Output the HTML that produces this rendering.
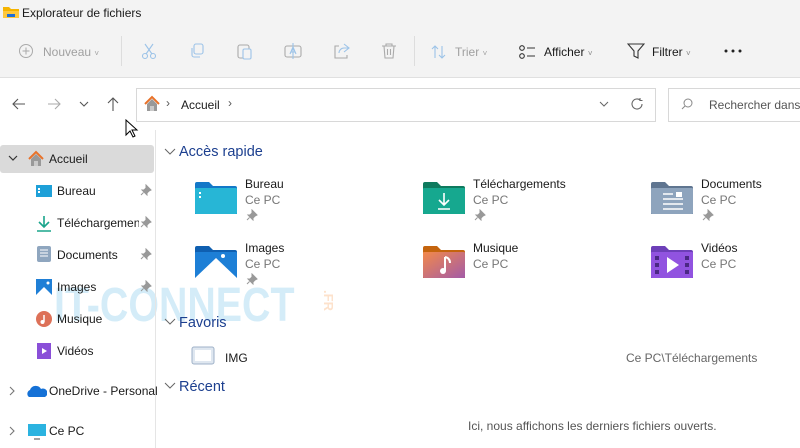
<!DOCTYPE html>
<html><head><meta charset="utf-8"><style>
*{box-sizing:border-box;margin:0;padding:0}
body{width:800px;height:448px;overflow:hidden;background:#fff;font-family:"Liberation Sans",sans-serif;font-size:12px;color:#1a1a1a;position:relative}
.a{position:absolute;white-space:nowrap}
.top{position:absolute;left:0;top:0;width:800px;height:78px;background:#f3f3f3;border-bottom:1px solid #e0e0e0}
.g{color:#a0a0a0}
.sb{color:#1a1a1a;font-size:12px}
.sub{color:#777}
.hd{color:#1c3f8f;font-size:14.5px}
</style></head><body>
<div class="top"></div>
<!-- watermark (behind) -->
<div class="a" style="left:54px;top:278px;font-size:48px;font-weight:bold;color:#d4ecf8;transform:scaleX(0.82);transform-origin:left top">IT-CONNECT</div>
<div class="a" style="left:318px;top:293px;font-size:13px;font-weight:bold;color:#fde2cc;transform:rotate(90deg)">.FR</div>
<!-- title -->
<svg class="a" style="left:2px;top:4px" width="18" height="16"><path d="M1 3h6l2 2h8v9H1z" fill="#f5b400"/><rect x="1" y="7" width="16" height="7" fill="#ffc83d"/><rect x="5" y="10" width="8" height="3" fill="#1e6fd9"/></svg>
<div class="a" style="left:22px;top:6px;font-size:12px">Explorateur de fichiers</div>
<!-- toolbar -->
<svg class="a" style="left:18px;top:43px" width="16" height="16"><circle cx="8" cy="8" r="6.5" fill="none" stroke="#aaa"/><path d="M8 4.5v7M4.5 8h7" stroke="#aaa"/></svg>
<div class="a g" style="left:43px;top:45px">Nouveau <span style="font-size:8px">˅</span></div>
<div class="a" style="left:121px;top:36px;width:1px;height:30px;background:#ddd"></div>
<svg class="a" style="left:140px;top:42px" width="18" height="18" fill="none" stroke="#9cc3e8" stroke-width="1.1"><circle cx="5" cy="14" r="2.5"/><circle cx="13" cy="14" r="2.5"/><path d="M6 12L13 2M12 12L5 2"/></svg>
<svg class="a" style="left:188px;top:42px" width="18" height="18" fill="none" stroke="#9cc3e8" stroke-width="1.1"><rect x="6" y="2" width="9" height="10" rx="2"/><path d="M4 6v7a2 2 0 0 0 2 2h6"/></svg>
<svg class="a" style="left:236px;top:42px" width="18" height="18" fill="none" stroke="#aaa" stroke-width="1.1"><rect x="2" y="3" width="11" height="13" rx="2"/><rect x="7" y="7" width="8" height="10" rx="1.5" stroke="#9cc3e8" fill="#f3f3f3"/></svg>
<svg class="a" style="left:284px;top:42px" width="18" height="18" fill="none" stroke="#9cc3e8" stroke-width="1.1"><rect x="1" y="4" width="16" height="11" rx="2" stroke="#aaa"/><path d="M6 12l3-7 3 7M7 10h4M9 1v16"/></svg>
<svg class="a" style="left:332px;top:42px" width="18" height="18" fill="none" stroke="#9cc3e8" stroke-width="1.1"><path d="M12 2l5 4-5 4M17 6h-5a5 5 0 0 0-5 5" /><path d="M7 4H3v12h12v-3" stroke="#aaa"/></svg>
<svg class="a" style="left:380px;top:42px" width="18" height="18" fill="none" stroke="#aaa" stroke-width="1.1"><path d="M2 4h14M6 4V2h6v2M4 4l1 12h8l1-12M7.5 7v6M10.5 7v6"/></svg>
<div class="a" style="left:414px;top:36px;width:1px;height:30px;background:#ddd"></div>
<svg class="a" style="left:430px;top:44px" width="18" height="16" fill="none" stroke="#9cc3e8" stroke-width="1.1"><path d="M5 14V2M2 5l3-3 3 3M12 2v12M9 11l3 3 3-3"/></svg>
<div class="a g" style="left:455px;top:45px">Trier <span style="font-size:8px">˅</span></div>
<svg class="a" style="left:518px;top:44px" width="18" height="16" fill="none" stroke="#333" stroke-width="1.1"><circle cx="4" cy="4" r="2.3"/><circle cx="4" cy="12" r="2.3"/><path d="M9 4h8M9 12h8"/></svg>
<div class="a" style="left:544px;top:45px">Afficher <span style="font-size:8px;color:#888">˅</span></div>
<svg class="a" style="left:627px;top:42px" width="18" height="18" fill="none" stroke="#333" stroke-width="1.1"><path d="M1 2h16l-6 7v7l-4-2V9z"/></svg>
<div class="a" style="left:652px;top:45px">Filtrer <span style="font-size:8px;color:#888">˅</span></div>
<svg class="a" style="left:724px;top:49px" width="18" height="4" fill="#222"><circle cx="2" cy="2" r="1.5"/><circle cx="9" cy="2" r="1.5"/><circle cx="16" cy="2" r="1.5"/></svg>
<!-- nav -->
<svg class="a" style="left:11px;top:97px" width="16" height="14" fill="none" stroke="#555" stroke-width="1.1"><path d="M14 7H2M7 2L2 7l5 5"/></svg>
<svg class="a" style="left:46px;top:97px" width="16" height="14" fill="none" stroke="#aaa" stroke-width="1.1"><path d="M2 7h12M9 2l5 5-5 5"/></svg>
<svg class="a" style="left:79px;top:100px" width="10" height="8" fill="none" stroke="#555" stroke-width="1.1"><path d="M1 2l4 4 4-4"/></svg>
<svg class="a" style="left:106px;top:96px" width="14" height="16" fill="none" stroke="#555" stroke-width="1.1"><path d="M7 15V2M2 7l5-5 5 5"/></svg>
<div class="a" style="left:136px;top:88px;width:520px;height:34px;border:1px solid #d8d8d8"></div>
<svg class="a" style="left:143px;top:95px" width="18" height="18"><path d="M2 9L9 2l7 7" fill="none" stroke="#e8722a" stroke-width="2"/><path d="M4 9v7h10V9L9 4z" fill="#999"/><rect x="7" y="11" width="4" height="5" fill="#c9c9c9"/></svg>
<div class="a" style="left:166px;top:96px;color:#555">›</div>
<div class="a" style="left:181px;top:98px">Accueil</div>
<div class="a" style="left:228px;top:96px;color:#555">›</div>
<svg class="a" style="left:599px;top:101px" width="10" height="7" fill="none" stroke="#666" stroke-width="1"><path d="M1 1l4 4 4-4"/></svg>
<svg class="a" style="left:630px;top:97px" width="14" height="14" fill="none" stroke="#666" stroke-width="1.1"><path d="M12 7a5 5 0 1 1-2-4M10 1v2.5h2.5"/></svg>
<div class="a" style="left:668px;top:88px;width:140px;height:34px;border:1px solid #d8d8d8"></div>
<svg class="a" style="left:681px;top:98px" width="12" height="12" fill="none" stroke="#888" stroke-width="1"><circle cx="7" cy="5" r="4"/><path d="M4 8l-3 3"/></svg>
<div class="a" style="left:709px;top:98px;color:#555">Rechercher dans</div>
<!-- cursor -->
<svg class="a" style="left:125px;top:119px" width="14" height="20"><path d="M1 1v15l4-4 3 6 2-1-3-6h5z" fill="#fff" stroke="#000"/></svg>
<!-- sidebar -->
<div class="a" style="left:155px;top:130px;width:1px;height:318px;background:#e5e5e5"></div>
<div class="a" style="left:0;top:145px;width:154px;height:28px;background:#dadada;border-radius:3px"></div>
<svg class="a" style="left:8px;top:155px" width="10" height="7" fill="none" stroke="#333" stroke-width="1.2"><path d="M1 1l4 4 4-4"/></svg>
<svg class="a" style="left:27px;top:150px" width="18" height="18"><path d="M2 9L9 2l7 7" fill="none" stroke="#e8722a" stroke-width="2"/><path d="M4 9v7h10V9L9 4z" fill="#999"/><rect x="7" y="11" width="4" height="5" fill="#c9c9c9"/></svg>
<div class="a sb" style="left:49px;top:152px">Accueil</div>

<svg class="a" style="left:36px;top:184px" width="16" height="14"><rect x="0" y="1" width="16" height="12" fill="#1ea0d8"/><rect x="2" y="4" width="2" height="2" fill="#fff"/><rect x="2" y="7" width="2" height="2" fill="#fff"/></svg>
<div class="a sb" style="left:57px;top:184px">Bureau</div>
<svg class="a" style="left:140px;top:184px" width="12" height="12"><path d="M6 1l5 5-2 1-2 2 0 2-5-5h2l2-2z M3.5 8.5L1 11" fill="#999" stroke="#999"/></svg>
<svg class="a" style="left:36px;top:215px" width="16" height="18" fill="none" stroke="#1aa58c" stroke-width="1.6"><path d="M8 1v11M3 7l5 5 5-5M1 16h14"/></svg>
<div class="a sb" style="left:57px;top:216px;width:82px;overflow:hidden">Téléchargements</div>
<svg class="a" style="left:140px;top:216px" width="12" height="12"><path d="M6 1l5 5-2 1-2 2 0 2-5-5h2l2-2z M3.5 8.5L1 11" fill="#999" stroke="#999"/></svg>
<svg class="a" style="left:37px;top:246px" width="14" height="16"><rect x="0" y="0" width="14" height="16" rx="2" fill="#8fa6bf"/><path d="M3 4h8M3 7h8M3 10h8" stroke="#fff"/></svg>
<div class="a sb" style="left:57px;top:248px">Documents</div>
<svg class="a" style="left:140px;top:248px" width="12" height="12"><path d="M6 1l5 5-2 1-2 2 0 2-5-5h2l2-2z M3.5 8.5L1 11" fill="#999" stroke="#999"/></svg>
<svg class="a" style="left:36px;top:279px" width="16" height="16"><rect width="16" height="16" fill="#1f7fd6"/><path d="M0 16L8 8l8 8z" fill="#fff"/><circle cx="12" cy="4" r="1.5" fill="#fff"/></svg>
<div class="a sb" style="left:57px;top:280px">Images</div>
<svg class="a" style="left:140px;top:280px" width="12" height="12"><path d="M6 1l5 5-2 1-2 2 0 2-5-5h2l2-2z M3.5 8.5L1 11" fill="#999" stroke="#999"/></svg>
<svg class="a" style="left:36px;top:311px" width="16" height="16"><circle cx="8" cy="8" r="8" fill="#dd7158"/><path d="M8 4v7" stroke="#fff" stroke-width="1.5"/><circle cx="6.5" cy="11" r="2" fill="#fff"/></svg>
<div class="a sb" style="left:57px;top:312px">Musique</div>
<svg class="a" style="left:37px;top:343px" width="14" height="16"><rect width="14" height="16" fill="#8a4fd8"/><path d="M5 5l5 3-5 3z" fill="#fff"/></svg>
<div class="a sb" style="left:57px;top:344px">Vidéos</div>

<svg class="a" style="left:9px;top:386px" width="7" height="10" fill="none" stroke="#777" stroke-width="1.1"><path d="M1 1l4 4-4 4"/></svg>
<svg class="a" style="left:27px;top:384px" width="20" height="14"><path d="M2 13a4 4 0 0 1 1-7 6 6 0 0 1 11-1 4 4 0 0 1 4 8z" fill="#1571d6"/></svg>
<div class="a sb" style="left:49px;top:384px">OneDrive - Personal</div>
<svg class="a" style="left:9px;top:426px" width="7" height="10" fill="none" stroke="#777" stroke-width="1.1"><path d="M1 1l4 4-4 4"/></svg>
<svg class="a" style="left:28px;top:423px" width="18" height="18"><rect x="0" y="1" width="18" height="12" fill="#2bb3e0"/><path d="M6 16h6" stroke="#444"/></svg>
<div class="a sb" style="left:49px;top:424px">Ce PC</div>

<!-- main -->
<svg class="a" style="left:164px;top:148px" width="12" height="8" fill="none" stroke="#666"><path d="M1 1l5 5 5-5"/></svg>
<div class="a hd" style="left:179px;top:144px">Accès rapide</div>

<svg class="a" style="left:195px;top:180px" width="42" height="36"><path d="M0 4a2 2 0 0 1 2-2h12l4 4h22a2 2 0 0 1 2 2v26H0z" fill="#1378c8"/><rect x="0" y="8" width="42" height="26" rx="1" fill="#27b6d6"/><rect x="4" y="12" width="2" height="2" fill="#fff"/><rect x="4" y="16" width="2" height="2" fill="#fff"/></svg>
<div class="a" style="left:245px;top:177px">Bureau</div><div class="a sub" style="left:245px;top:193px">Ce PC</div>
<svg class="a" style="left:246px;top:209px" width="12" height="12"><path d="M6 1l5 5-2 1-2 2 0 2-5-5h2l2-2z M3.5 8.5L1 11" fill="#999" stroke="#999"/></svg>

<svg class="a" style="left:423px;top:180px" width="42" height="36"><path d="M0 4a2 2 0 0 1 2-2h12l4 4h22a2 2 0 0 1 2 2v26H0z" fill="#0e7a5e"/><rect x="0" y="8" width="42" height="26" rx="1" fill="#16a88f"/><path d="M21 13v12M16 20l5 5 5-5M15 29h12" stroke="#fff" stroke-width="1.6" fill="none"/></svg>
<div class="a" style="left:473px;top:177px">Téléchargements</div><div class="a sub" style="left:473px;top:193px">Ce PC</div>
<svg class="a" style="left:474px;top:209px" width="12" height="12"><path d="M6 1l5 5-2 1-2 2 0 2-5-5h2l2-2z M3.5 8.5L1 11" fill="#999" stroke="#999"/></svg>

<svg class="a" style="left:651px;top:180px" width="42" height="36"><path d="M0 4a2 2 0 0 1 2-2h12l4 4h22a2 2 0 0 1 2 2v26H0z" fill="#5f7590"/><rect x="0" y="8" width="42" height="26" rx="1" fill="#8ea4bd"/><path d="M12 14h10M12 19h20M12 24h20M12 29h20" stroke="#fff" stroke-width="1.6"/><rect x="25" y="12" width="6" height="5" fill="#fff"/></svg>
<div class="a" style="left:701px;top:177px">Documents</div><div class="a sub" style="left:701px;top:193px">Ce PC</div>
<svg class="a" style="left:702px;top:209px" width="12" height="12"><path d="M6 1l5 5-2 1-2 2 0 2-5-5h2l2-2z M3.5 8.5L1 11" fill="#999" stroke="#999"/></svg>

<svg class="a" style="left:195px;top:244px" width="42" height="36"><path d="M0 4a2 2 0 0 1 2-2h12l4 4h22a2 2 0 0 1 2 2v26H0z" fill="#0f5fb0"/><rect x="0" y="8" width="42" height="26" rx="1" fill="#1d7fd6"/><path d="M0 34l21-20 21 20z" fill="#fff"/><circle cx="28" cy="12" r="2" fill="#fff"/></svg>
<div class="a" style="left:245px;top:241px">Images</div><div class="a sub" style="left:245px;top:257px">Ce PC</div>
<svg class="a" style="left:246px;top:273px" width="12" height="12"><path d="M6 1l5 5-2 1-2 2 0 2-5-5h2l2-2z M3.5 8.5L1 11" fill="#999" stroke="#999"/></svg>

<svg class="a" style="left:423px;top:244px" width="42" height="36"><defs><linearGradient id="m" x1="0" y1="0" x2="1" y2="1"><stop offset="0" stop-color="#f2894a"/><stop offset="1" stop-color="#a35ba8"/></linearGradient></defs><path d="M0 4a2 2 0 0 1 2-2h12l4 4h22a2 2 0 0 1 2 2v26H0z" fill="#c4640e"/><rect x="0" y="8" width="42" height="26" rx="1" fill="url(#m)"/><path d="M22 13v14" stroke="#fff" stroke-width="2"/><path d="M22 13q5 1 5 6" stroke="#fff" stroke-width="2" fill="none"/><circle cx="20" cy="27" r="3" fill="#fff"/></svg>
<div class="a" style="left:473px;top:241px">Musique</div><div class="a sub" style="left:473px;top:257px">Ce PC</div>

<svg class="a" style="left:651px;top:244px" width="42" height="36"><path d="M0 4a2 2 0 0 1 2-2h12l4 4h22a2 2 0 0 1 2 2v26H0z" fill="#6d3fb8"/><rect x="0" y="8" width="42" height="26" rx="1" fill="#9153e0"/><g fill="#4b2885"><rect x="4" y="12" width="4" height="4"/><rect x="4" y="19" width="4" height="4"/><rect x="4" y="26" width="4" height="4"/><rect x="34" y="12" width="4" height="4"/><rect x="34" y="19" width="4" height="4"/><rect x="34" y="26" width="4" height="4"/></g><path d="M16 13l12 8-12 8z" fill="#fff"/></svg>
<div class="a" style="left:701px;top:241px">Vidéos</div><div class="a sub" style="left:701px;top:257px">Ce PC</div>

<svg class="a" style="left:164px;top:318px" width="12" height="8" fill="none" stroke="#666"><path d="M1 1l5 5 5-5"/></svg>
<div class="a hd" style="left:179px;top:315px">Favoris</div>
<svg class="a" style="left:191px;top:346px" width="24" height="20"><rect x="1" y="1" width="22" height="17" rx="2" fill="#dfe7f0" stroke="#9fb2c8"/><rect x="4" y="4" width="16" height="11" fill="#fff"/></svg>
<div class="a" style="left:225px;top:351px">IMG</div>
<div class="a sub" style="left:626px;top:351px;color:#666">Ce PC\Téléchargements</div>

<svg class="a" style="left:164px;top:382px" width="12" height="8" fill="none" stroke="#666"><path d="M1 1l5 5 5-5"/></svg>
<div class="a hd" style="left:179px;top:379px">Récent</div>
<div class="a" style="left:468px;top:419px;color:#555">Ici, nous affichons les derniers fichiers ouverts.</div>
</body></html>
